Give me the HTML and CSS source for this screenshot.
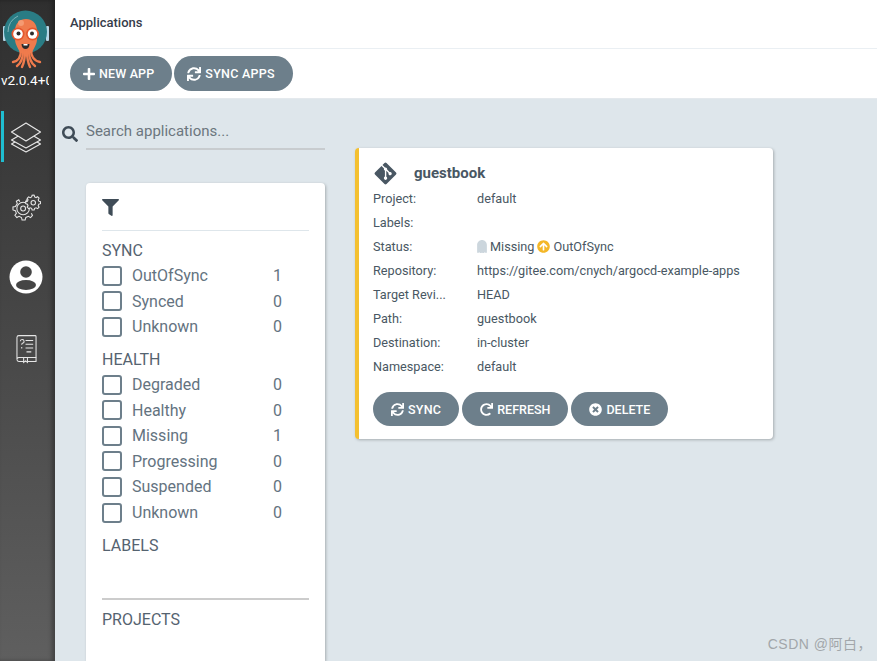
FILE: index.html
```html
<!DOCTYPE html>
<html>
  <head>
    <title>Applications</title>
    <link rel="stylesheet" href="styles.css">
  </head>
  <body>
    <svg class="icon-defs" width="0" height="0">
      <symbol id="i-plus" viewBox="0 0 448 512"><path d="M416 208H272V64c0-17.67-14.33-32-32-32h-32c-17.67 0-32 14.33-32 32v144H32c-17.67 0-32 14.33-32 32v32c0 17.67 14.33 32 32 32h144v144c0 17.67 14.33 32 32 32h32c17.67 0 32-14.33 32-32V304h144c17.67 0 32-14.33 32-32v-32c0-17.67-14.33-32-32-32z"/></symbol>
      <symbol id="i-sync" viewBox="0 0 512 512"><path d="M440.65 12.57l4 82.77A247.16 247.16 0 0 0 255.83 8C134.73 8 33.91 94.92 12.29 209.82A12 12 0 0 0 24.09 224h49.05a12 12 0 0 0 11.67-9.26 175.91 175.91 0 0 1 317-56.94l-101.46-4.86a12 12 0 0 0-12.57 12v47.41a12 12 0 0 0 12 12H500a12 12 0 0 0 12-12V12a12 12 0 0 0-12-12h-47.37a12 12 0 0 0-11.98 12.57zM255.83 432a175.61 175.61 0 0 1-146-77.8l101.8 4.87a12 12 0 0 0 12.57-12v-47.4a12 12 0 0 0-12-12H12a12 12 0 0 0-12 12V500a12 12 0 0 0 12 12h47.35a12 12 0 0 0 12-12.6l-4.15-82.57A247.17 247.17 0 0 0 255.83 504c121.11 0 221.93-86.92 243.55-201.82a12 12 0 0 0-11.8-14.18h-49.05a12 12 0 0 0-11.67 9.26A175.86 175.86 0 0 1 255.83 432z"/></symbol>
      <symbol id="i-redo" viewBox="0 0 512 512"><path d="M500.33 0h-47.41a12 12 0 0 0-12 12.57l4 82.76A247.42 247.42 0 0 0 256 8C119.34 8 7.9 119.53 8 256.19 8.1 393.07 119.1 504 256 504a247.1 247.1 0 0 0 166.18-63.91 12 12 0 0 0 .48-17.43l-34-34a12 12 0 0 0-16.38-.55A176 176 0 1 1 402.1 157.8l-101.53-4.87a12 12 0 0 0-12.57 12v47.41a12 12 0 0 0 12 12h200.33a12 12 0 0 0 12-12V12a12 12 0 0 0-12-12z"/></symbol>
      <symbol id="i-times" viewBox="0 0 512 512"><path d="M256 8C119 8 8 119 8 256s111 248 248 248 248-111 248-248S393 8 256 8zm121.6 313.1c4.7 4.7 4.7 12.3 0 17L338 377.6c-4.7 4.7-12.3 4.7-17 0L256 312l-65.1 65.6c-4.7 4.7-12.3 4.7-17 0L134.4 338c-4.7-4.7-4.7-12.3 0-17l65.6-65-65.6-65.1c-4.7-4.7-4.7-12.3 0-17l39.6-39.6c4.7-4.7 12.3-4.7 17 0l65 65.7 65.1-65.6c4.7-4.7 12.3-4.7 17 0l39.6 39.6c4.7 4.7 4.7 12.3 0 17L312 256l65.6 65.1z"/></symbol>
    </svg>

    <aside class="sidebar">
      <div class="logo">
        <svg width="52" height="68" viewBox="0 0 52 68">
          <rect x="3" y="25" width="3" height="15" rx="1" fill="#b5d6e6"/>
          <rect x="46" y="25" width="3" height="15" rx="1" fill="#b5d6e6"/>
          <circle cx="25.500" cy="31" r="21.500" fill="#2a7c84"/>
          <path d="M8 31a18 18 0 0 1 10-16" fill="none" stroke="#7fb3b8" stroke-width="1"/>
          <path d="M15 30c0-8 5-12 11-12s11 4 11 12v8c0 6-4 10-5 14H20c-1-4-5-8-5-14z" fill="#ef7b4d"/>
          <g fill="none" stroke="#ef7b4d" stroke-width="2.400" stroke-linecap="round">
            <path d="M21 49c0 6-2 11-8 12"/>
            <path d="M23 50c0 7-2 12-6 15"/>
            <path d="M25 50c0 7-1 12-3 16"/>
            <path d="M27 50c0 7 1 12 3 16"/>
            <path d="M29 50c0 7 2 12 6 15"/>
            <path d="M31 49c0 6 3 11 9 12"/>
          </g>
          <circle cx="21" cy="22" r="3" fill="#f59a72"/>
          <circle cx="18" cy="33" r="6.500" fill="#e5562d"/>
          <circle cx="32.500" cy="33" r="6.500" fill="#e5562d"/>
          <circle cx="18" cy="33" r="4.800" fill="#fff"/>
          <circle cx="32.500" cy="33" r="4.800" fill="#fff"/>
          <circle cx="18.500" cy="32.500" r="2" fill="#2b2b2b"/>
          <circle cx="32" cy="32.500" r="2" fill="#2b2b2b"/>
          <path d="M21.500 43h8c0 3-1.800 5-4 5s-4-2-4-5z" fill="#2b2b2b"/>
          <rect x="23.500" y="43" width="4" height="1.500" fill="#fff"/>
        </svg>
      </div>
      <div class="version">v2.0.4+0f</div>
      <nav class="nav">
        <a class="nav-item active">
          <svg width="32" height="32" viewBox="0 0 32 32" fill="none" stroke="#e6e6e6" stroke-width="1.200" stroke-linejoin="round">
            <path d="M16 14.500 1.500 23 16 31 30.500 23z"/>
            <path d="M16 10.500 1.500 19 16 27 30.500 19z" fill="#3d3d3d"/>
            <path d="M16 2 1.500 11 16 20 30.500 11z" fill="#3d3d3d"/>
          </svg>
        </a>
        <a class="nav-item">
          <svg width="29" height="29" viewBox="0 0 30 30" fill="none" stroke="#e6e6e6" stroke-width="1.100">
            <path d="M14 8.500l1-2.500 3 .5M8 8l-1-2-2.500 1.500L5.500 10 3.500 13 1 13.500v3l2.500.7L4.500 20l-1.500 2 2 2.300 2.300-1.300 2.500 1.300.6 2.500h3.200l.7-2.500 2.700-1.200 2.200 1.300 2-2.200-1.200-2.300"/>
            <circle cx="11.500" cy="15" r="6.500"/>
            <circle cx="11.500" cy="15" r="2.500"/>
            <path d="M22 1l1 .2.400 1.800 1.500.7 1.600-.9 1.500 1.500-.9 1.600.6 1.500 1.800.5v2.100l-1.800.5-.6 1.500.9 1.600-1.500 1.500-1.600-.9-1.500.6-.5 1.800h-2.100l-.5-1.800-1.500-.6-1.600.9-1.500-1.500.9-1.600-.6-1.500-1.800-.5V8l1.800-.5.6-1.500-.9-1.600 1.500-1.500 1.600.9 1.500-.7.500-1.800z" fill="#404040"/>
            <circle cx="22" cy="9" r="2.300"/>
          </svg>
        </a>
        <a class="nav-item nav-user">
          <svg width="34" height="34" viewBox="0 0 34 34">
            <circle cx="17" cy="17" r="16.500" fill="#fff"/>
            <circle cx="17" cy="12" r="5.800" fill="#454545"/>
            <ellipse cx="17" cy="25" rx="10" ry="5" fill="#454545"/>
          </svg>
        </a>
        <a class="nav-item nav-help">
          <svg width="21" height="30" viewBox="0 0 22 30" fill="none" stroke="#e6e6e6" stroke-width="1.100">
            <path d="M3 1h17a1 1 0 0 1 1 1v22H3a2 2 0 0 0-2 2V3a2 2 0 0 1 2-2z"/>
            <path d="M1 26a2 2 0 0 0 2 2h5M12 28h9v-4M8 24v5l2-1.500 2 1.500v-5"/>
            <path d="M10 6h8M10 10h8M10 14h8M11 18h5"/>
            <path d="M4.500 7a2 2 0 1 1 2.300 2c-.6.300-.8.800-.8 1.500M6 13v1.500"/>
          </svg>
        </a>
      </nav>
    </aside>

    <div class="main">
      <header class="top-bar">
        <span class="page-title">Applications</span>
      </header>
      <div class="toolbar">
        <button class="btn btn-large"><svg class="btn-icon icon-plus"><use href="#i-plus"/></svg>NEW APP</button>
        <button class="btn btn-large btn-sync"><svg class="btn-icon"><use href="#i-sync"/></svg>SYNC APPS</button>
      </div>

      <div class="content">
        <div class="left-col">
          <div class="search">
            <svg class="search-icon" viewBox="0 0 512 512"><path d="M505 442.7L405.3 343c-4.500-4.500-10.600-7-17-7H372c27.600-35.300 44-79.700 44-128C416 93.100 322.900 0 208 0S0 93.100 0 208s93.100 208 208 208c48.300 0 92.700-16.400 128-44v16.300c0 6.400 2.500 12.500 7 17l99.700 99.700c9.400 9.400 24.600 9.400 33.900 0l28.300-28.300c9.400-9.400 9.400-24.600.100-34zM208 336c-70.700 0-128-57.200-128-128 0-70.700 57.200-128 128-128 70.700 0 128 57.200 128 128 0 70.700-57.200 128-128 128z"/></svg>
            <input class="search-input" type="text" placeholder="Search applications...">
          </div>

          <section class="filters">
            <div class="filters-head">
              <svg class="filter-icon" viewBox="0 0 512 512"><path d="M487.976 0H24.028C2.710 0-8.047 25.866 7.058 40.971L192 225.941V432c0 7.831 3.821 15.170 10.237 19.662l80 55.980C298.020 518.690 320 507.493 320 487.980V225.941l184.947-184.970C520.021 25.896 509.338 0 487.976 0z"/></svg>
            </div>

            <h3 class="filter-title">SYNC</h3>
            <label class="filter-row"><span class="box"></span><span class="filter-name">OutOfSync</span><span class="filter-count">1</span></label>
            <label class="filter-row"><span class="box"></span><span class="filter-name">Synced</span><span class="filter-count">0</span></label>
            <label class="filter-row"><span class="box"></span><span class="filter-name">Unknown</span><span class="filter-count">0</span></label>

            <h3 class="filter-title">HEALTH</h3>
            <label class="filter-row"><span class="box"></span><span class="filter-name">Degraded</span><span class="filter-count">0</span></label>
            <label class="filter-row"><span class="box"></span><span class="filter-name">Healthy</span><span class="filter-count">0</span></label>
            <label class="filter-row"><span class="box"></span><span class="filter-name">Missing</span><span class="filter-count">1</span></label>
            <label class="filter-row"><span class="box"></span><span class="filter-name">Progressing</span><span class="filter-count">0</span></label>
            <label class="filter-row"><span class="box"></span><span class="filter-name">Suspended</span><span class="filter-count">0</span></label>
            <label class="filter-row"><span class="box"></span><span class="filter-name">Unknown</span><span class="filter-count">0</span></label>

            <h3 class="filter-title filter-title-next">LABELS</h3>
            <div class="filter-rule"></div>
            <h3 class="filter-title">PROJECTS</h3>
          </section>
        </div>

        <article class="card">
          <div class="card-head">
            <svg class="git-icon" viewBox="0 0 448 512"><path d="M439.550 236.050L244 40.450a28.870 28.870 0 0 0-40.810 0l-40.660 40.630 51.520 51.520c27.060-9.140 52.680 16.770 43.390 43.680l49.660 49.660c34.230-11.800 61.180 31 35.470 56.690-26.490 26.490-70.210-2.870-56-37.340L240.220 199v121.850c25.300 12.540 22.260 41.850 9.080 55a34.340 34.340 0 0 1-48.550 0c-17.570-17.600-11.070-46.910 11.250-56v-123c-20.800-8.510-24.600-30.740-18.640-45L142.570 101 8.450 235.140a28.860 28.860 0 0 0 0 40.810l195.610 195.600a28.860 28.860 0 0 0 40.800 0l194.690-194.690a28.860 28.860 0 0 0 0-40.810z"/></svg>
            <span class="app-name">guestbook</span>
          </div>
          <div class="field"><span class="field-label">Project:</span><span>default</span></div>
          <div class="field"><span class="field-label">Labels:</span><span></span></div>
          <div class="field">
            <span class="field-label">Status:</span>
            <span class="status">
              <svg class="ghost-icon" viewBox="0 0 384 512"><path d="M192 0C86 0 0 86 0 192v288c0 28 33 42 53 22l27-22 53 38c9 7 21 7 30 0l29-22 29 22c9 7 21 7 30 0l53-38 27 22c20 20 53 6 53-22V192C384 86 298 0 192 0z"/></svg>
              Missing
              <svg class="sync-icon" viewBox="0 0 512 512"><path d="M8 256C8 119 119 8 256 8s248 111 248 248-111 248-248 248S8 393 8 256zm143.600 28.900l72.400-75.500V392c0 13.300 10.700 24 24 24h16c13.300 0 24-10.700 24-24V209.400l72.400 75.500c9.300 9.700 24.800 9.900 34.300.4l10.900-11c9.400-9.400 9.400-24.600 0-33.900L273 107.700c-9.400-9.400-24.600-9.400-33.900 0L106.300 240.400c-9.400 9.400-9.400 24.600 0 33.900l10.900 11c9.600 9.500 25.100 9.300 34.400-.4z"/></svg>
              OutOfSync
            </span>
          </div>
          <div class="field"><span class="field-label">Repository:</span><span>https://gitee.com/cnych/argocd-example-apps</span></div>
          <div class="field"><span class="field-label">Target Revi...</span><span>HEAD</span></div>
          <div class="field"><span class="field-label">Path:</span><span>guestbook</span></div>
          <div class="field"><span class="field-label">Destination:</span><span>in-cluster</span></div>
          <div class="field"><span class="field-label">Namespace:</span><span>default</span></div>
          <div class="card-actions">
            <button class="btn btn-small btn-sync"><svg class="btn-icon"><use href="#i-sync"/></svg>SYNC</button>
            <button class="btn btn-small"><svg class="btn-icon"><use href="#i-redo"/></svg>REFRESH</button>
            <button class="btn btn-small"><svg class="btn-icon"><use href="#i-times"/></svg>DELETE</button>
          </div>
        </article>
      </div>
    </div>

    <div class="watermark">CSDN @阿白，</div>
  </body>
</html>
```

FILE: styles.css
```css
html, body {
  height: 100%;
}

body {
  margin: 0;
  display: flex;
  overflow: hidden;
  background-color: #dee6eb;
  color: #495763;
  font-family: Roboto, "Noto Sans CJK SC", sans-serif;
}

.icon-defs {
  position: absolute;
}

/* sidebar */
.sidebar {
  flex: 0 0 55px;
  background: linear-gradient(to bottom, #2f2f2f, #5f5f5f);
  box-shadow: inset -3px 0 4px rgba(0, 0, 0, 0.3);
  z-index: 1;
}

.logo {
  height: 70px;
  display: flex;
  padding-top: 1px;
  box-sizing: border-box;
}

.version {
  width: 49px;
  padding-left: 1px;
  overflow: hidden;
  white-space: nowrap;
  color: #fff;
  font-size: 13.6px;
  line-height: 20px;
  box-sizing: border-box;
}

.nav {
  margin-top: 21px;
}

.nav-item {
  height: 51px;
  margin-bottom: 21px;
  margin-left: 1px;
  display: flex;
  align-items: center;
  justify-content: center;
  padding-right: 7px;
  box-sizing: border-box;
  border-left: 3px solid transparent;
}

.nav-item.active {
  border-left-color: #1fbdd0;
}

.nav-user {
  margin-top: -4px;
}

.nav-help {
  margin-top: 2px;
}

/* header */
.main {
  flex: 1;
  min-width: 0;
  display: flex;
  flex-direction: column;
}

.top-bar {
  height: 48px;
  padding-left: 15px;
  display: flex;
  align-items: center;
  background-color: #fff;
  border-bottom: 1px solid #eaeff3;
}

.page-title {
  font-size: 13px;
  font-weight: 500;
  color: #363c4a;
  position: relative;
  top: -2px;
}

.toolbar {
  height: 50px;
  padding: 7px 0 0 15px;
  display: flex;
  gap: 2px;
  box-sizing: border-box;
  background-color: #fff;
  border-bottom: 1px solid #e4e9ed;
}

.btn {
  display: inline-flex;
  align-items: center;
  justify-content: center;
  border: none;
  border-radius: 18px;
  background-color: #6d7f8b;
  color: #fff;
  font-family: inherit;
  font-size: 12.5px;
  font-weight: 500;
  padding: 0;
}

.btn-large {
  height: 35px;
  padding: 0 18px 0 13px;
  letter-spacing: 0.15px;
}

.btn-small {
  height: 34px;
  padding: 0 18px;
}

.btn-sync {
  letter-spacing: 0.25px;
}

.btn-icon {
  width: 13px;
  height: 13px;
  margin-right: 4px;
  fill: #fff;
  flex: none;
}

.btn-large .btn-icon {
  width: 14px;
  height: 14px;
}

.btn-large .icon-plus {
  width: 12px;
}

/* left column */
.content {
  flex: 1;
  display: flex;
  min-height: 0;
}

.left-col {
  flex: 0 0 270px;
  padding-left: 7px;
  box-sizing: border-box;
  display: flex;
  flex-direction: column;
}

.search {
  display: flex;
  height: 51px;
  padding-top: 15px;
  box-sizing: border-box;
  align-items: flex-start;
}

.search-icon {
  width: 16px;
  height: 16px;
  margin: 12px 8px 0 0;
  fill: #3f4c57;
  flex: none;
}

.search-input {
  flex: 1;
  min-width: 0;
  height: 36px;
  padding: 0;
  border: none;
  border-bottom: 2px solid #c8cccf;
  background: transparent;
  font-family: inherit;
  font-size: 15px;
  color: #495763;
  outline: none;
  box-sizing: border-box;
}

.search-input::placeholder {
  color: #6c767e;
  opacity: 1;
}

.filters {
  margin: 33px 0 0 24px;
  flex: 1;
  padding: 0 16px;
  background-color: #fff;
  border-radius: 4px 4px 0 0;
  box-shadow: 1px 1px 3px rgba(0, 0, 0, 0.25);
}

.filters-head {
  height: 48px;
  padding-top: 16px;
  box-sizing: border-box;
  border-bottom: 1px solid #dee6eb;
}

.filter-icon {
  display: block;
  width: 17px;
  height: 17px;
  fill: #3f4c57;
}

.filter-title {
  margin: 0;
  font-size: 16px;
  font-weight: 400;
  line-height: 20px;
  padding: 10px 0 2px;
  color: #556370;
}

.filter-title-next {
  padding-top: 11px;
}

.filter-row {
  display: flex;
  align-items: center;
  height: 25.6px;
  font-size: 16px;
  color: #64737f;
}

.box {
  width: 20px;
  height: 20px;
  flex: none;
  box-sizing: border-box;
  border: 2px solid #6d7f8b;
  border-radius: 3px;
  margin-right: 10px;
}

.filter-name {
  width: 141px;
}

.filter-rule {
  margin-top: 40px;
  border-top: 2px solid #cccccc;
}

/* application card */
.card {
  width: 418px;
  height: 291px;
  margin: 49px 0 0 30px;
  padding: 13px 14px 0;
  background-color: #fff;
  border-left: 4px solid #f4c030;
  border-radius: 4px;
  box-shadow: 1px 1px 3px rgba(0, 0, 0, 0.25);
  box-sizing: border-box;
  font-size: 12.7px;
  color: #495763;
}

.card-head {
  display: flex;
  align-items: flex-start;
  height: 25px;
}

.git-icon {
  width: 25px;
  height: 25px;
  fill: #495763;
}

.app-name {
  margin-left: 16px;
  font-size: 15px;
  font-weight: 700;
  line-height: 24px;
}

.field {
  display: flex;
  height: 24px;
  align-items: center;
}

.field-label {
  flex: 0 0 104px;
}

.status {
  display: flex;
  align-items: center;
  gap: 3px;
}

.ghost-icon {
  width: 10px;
  height: 13px;
  fill: #ccd6dd;
}

.sync-icon {
  width: 13px;
  height: 13px;
  fill: #f4b728;
}

.card-actions {
  display: flex;
  gap: 3px;
  margin-top: 14px;
}

.watermark {
  position: absolute;
  right: 5px;
  bottom: 8px;
  font-size: 14px;
  letter-spacing: 0.5px;
  color: #a2a6aa;
  font-family: "Liberation Sans", "Noto Sans CJK SC", sans-serif;
}
```
